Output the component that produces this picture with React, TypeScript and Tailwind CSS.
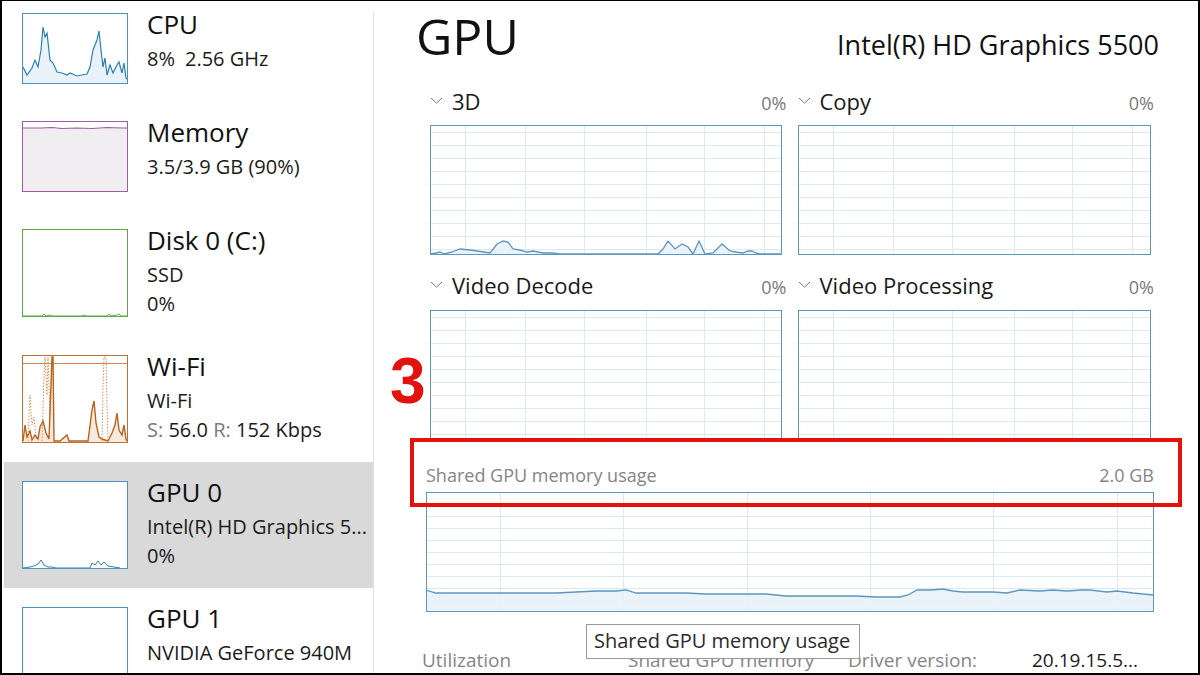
import React from "react";

type GraphProps = {
  w: number;
  h: number;
  vx: number[];
  hStart: number;
  hStep: number;
  line?: string;
};

// task manager style grid chart
function Graph({ w, h, vx, hStart, hStep, line }: GraphProps) {
  const rows: number[] = [];
  for (let y = hStart; y < h; y += hStep) rows.push(y);
  return (
    <svg width={w} height={h} className="block shrink-0">
      <rect x={0} y={0} width={w} height={h} fill="#ffffff" />
      {rows.map((y) => (
        <line key={"h" + y} x1={0} x2={w} y1={y + 0.5} y2={y + 0.5} stroke="#dde9f1" />
      ))}
      {vx.map((x) => (
        <line key={"v" + x} x1={x + 0.5} x2={x + 0.5} y1={0} y2={h} stroke="#dde9f1" />
      ))}
      {line && (
        <>
          <path d={`M0,${h} L${line} L${w},${h} Z`} fill="#e8f2f9" fillOpacity={0.9} />
          <polyline points={line} fill="none" stroke="#5d97bd" strokeWidth={1.3} />
        </>
      )}
      <rect x={0.5} y={0.5} width={w - 1} height={h - 1} fill="none" stroke="#5b98bb" />
    </svg>
  );
}

function Thumb({ h, color, children }: { h: number; color: string; children?: React.ReactNode }) {
  return (
    <svg width={106} height={h} className="block shrink-0">
      <rect x={0} y={0} width={106} height={h} fill="#ffffff" />
      {children}
      <rect x={0.5} y={0.5} width={105} height={h - 1} fill="none" stroke={color} />
    </svg>
  );
}

const cpuLine =
  "1,54 5,62 10,55 13,47 16,54 19,37 21,14 23,24 25,20 28,47 31,50 35,59 40,60 45,62 48,60 55,63 65,61 68,54 71,37 75,27 77,18 79,37 81,54 83,45 85,62 88,52 91,60 95,52 97,49 100,60 102,50 104,65 106,67";

const wifiSolid =
  "1,86 3,70 5,82 8,76 10,85 13,80 16,84 18,72 21,66 24,78 27,84 30,2 31,2 32,86 38,86 45,80 47,86 66,86 70,55 72,46 74,68 77,82 80,84 83,85 86,86 90,78 93,70 95,58 97,75 100,80 102,70 104,84 105,86";

const wifiDotted = [
  "6,86 8,40 10,70 12,62 14,84",
  "20,86 22,20 23,2 25,40 26,2 28,60",
  "80,86 81,30 82,2 84,2 85,50 86,86",
];

const gpu0Line = "1,87 8,86 12,85 16,83 19,79 22,84 26,86 30,86 34,87 68,87 70,82 73,84 76,80 79,84 82,81 86,85 92,86 98,87";

const gpuGridV = [35, 95, 154, 216, 274, 334];

const line3d =
  "0,129 6,128 10,127 14,129 22,127 30,124 40,125 47,126 54,127 60,128 64,123 67,119 73,116 78,117 83,124 90,125 97,127 103,126 108,127 113,128 122,128 130,129 153,129 197,129 228,129 233,124 238,116 245,124 252,119 258,122 263,129 269,116 275,129 283,128 288,123 292,119 300,126 306,127 313,128 318,126 322,126 326,128 330,129 352,129";

const sharedLine =
  "0,98 10,101 60,101 130,101 150,100 170,99 190,99 200,98 210,101 240,101 260,101 280,102 340,102 360,104 430,104 450,105 474,105 482,103 491,98 505,98 517,97 527,99 537,100 552,100 567,100 581,101 594,98 614,99 627,98 641,99 655,98 664,98 681,100 691,99 707,101 727,103";

function SideItem({
  title,
  sub,
  thumb,
  selected,
}: {
  title: string;
  sub: React.ReactNode[];
  thumb: React.ReactNode;
  selected?: boolean;
}) {
  return (
    <div className={`flex items-start pl-[18px] pt-[19px] pb-[18px] ${selected ? "bg-[#d9d9d9]" : ""}`}>
      {thumb}
      <div className="ml-[19px] flex flex-col text-[#1b1b1b] whitespace-nowrap">
        <div className="text-[26px] leading-[22px] text-[#111]">{title}</div>
        <div className="mt-[9px] flex flex-col">
          {sub.map((s, i) => (
            <div key={i} className="text-[20px] leading-[29px]">
              {s}
            </div>
          ))}
        </div>
      </div>
    </div>
  );
}

function Chevron() {
  return (
    <svg width={14} height={8} className="shrink-0 mr-[8px] self-start mt-[8px]">
      <polyline points="1,1 6.5,6 12,1" fill="none" stroke="#777" strokeWidth={1} />
    </svg>
  );
}

function Section({ label, graph }: { label: string; graph: React.ReactNode }) {
  return (
    <div className="flex flex-col">
      <div className="flex items-baseline -mr-[4px] h-[24px]">
        <Chevron />
        <span className="text-[22px] leading-[24px] text-[#1a1a1a]">{label}</span>
        <span className="ml-auto text-[18px] leading-[24px] text-[#7a7a7a]">0%</span>
      </div>
      {graph}
    </div>
  );
}

export default function App() {
  return (
    <div className="relative w-[1200px] h-[675px] overflow-hidden bg-white border-t border-l-2 border-r-2 border-b-2 border-black flex font-['Open_Sans','Noto_Sans',sans-serif]">
      {/* left list */}
      <div className="w-[371px] shrink-0 pl-[2px] -mt-[7px] flex flex-col">
        <SideItem
          title="CPU"
          sub={[
            <>
              8%<span className="ml-[10px]">2.56 GHz</span>
            </>,
          ]}
          thumb={
            <Thumb h={71} color="#4b93bd">
              <path d={`M1,70 L${cpuLine} L105,70 Z`} fill="#e9f2f8" />
              <polyline points={cpuLine} fill="none" stroke="#2f7fb5" strokeWidth={1.2} />
            </Thumb>
          }
        />
        <SideItem
          title="Memory"
          sub={["3.5/3.9 GB (90%)"]}
          thumb={
            <Thumb h={71} color="#a05aa8">
              <path d="M1,7 L20,7 30,6.5 40,7.5 55,7 70,7.5 85,6.5 100,7 105,7 L105,70 L1,70 Z" fill="#f1eef1" />
              <polyline points="1,7 20,7 30,6.5 40,7.5 55,7 70,7.5 85,6.5 100,7 105,7" fill="none" stroke="#a05aa8" strokeWidth={1.2} />
            </Thumb>
          }
        />
        <SideItem
          title="Disk 0 (C:)"
          sub={["SSD", "0%"]}
          thumb={
            <Thumb h={88} color="#5ea845">
              <polyline points="1,87 20,87 22,85 24,87 28,86 30,87 60,87 62,86 64,87 85,87 87,85 89,87 95,86 97,85 99,87 105,87" fill="none" stroke="#5ea845" strokeWidth={1} />
            </Thumb>
          }
        />
        <SideItem
          title="Wi-Fi"
          sub={[
            "Wi-Fi",
            <>
              <span className="text-[#7a7a7a]">S:</span> 56.0 <span className="text-[#7a7a7a]">R:</span> 152 Kbps
            </>,
          ]}
          thumb={
            <Thumb h={88} color="#c0712f">
              <line x1={0} x2={106} y1={8.5} y2={8.5} stroke="#cf8a55" />
              <path d={`M1,87 L${wifiSolid} L105,87 Z`} fill="#f7e9dd" />
              {wifiDotted.map((p, i) => (
                <polyline key={i} points={p} fill="none" stroke="#d9925a" strokeWidth={1} strokeDasharray="1.5 1.5" />
              ))}
              <polyline points={wifiSolid} fill="none" stroke="#b8631f" strokeWidth={1.4} />
            </Thumb>
          }
        />
        <SideItem
          title="GPU 0"
          selected
          sub={["Intel(R) HD Graphics 5...", "0%"]}
          thumb={
            <Thumb h={88} color="#4b93bd">
              <polyline points={gpu0Line} fill="none" stroke="#2f7fb5" strokeWidth={1} />
            </Thumb>
          }
        />
        <SideItem
          title="GPU 1"
          sub={["NVIDIA GeForce 940M", "0%"]}
          thumb={<Thumb h={88} color="#4b93bd" />}
        />
      </div>

      <div className="w-px shrink-0 mt-[11px] bg-[#e4e4e4]" />

      {/* detail panel */}
      <div className="flex-1 flex flex-col pl-[52px] pr-[44px]">
        <div className="mt-[10px] flex items-baseline justify-between -ml-[10px] -mr-[5px] text-[#111]">
          <span className="text-[50px] leading-[50px]">GPU</span>
          <span className="text-[27px] leading-[30px]">Intel(R) HD Graphics 5500</span>
        </div>

        <div className="mt-[28px] px-[4px] grid grid-cols-2 gap-x-[15px]">
          <Section label="3D" graph={<div className="mt-[12px]"><Graph w={352} h={130} vx={gpuGridV} hStart={7} hStep={13} line={line3d} /></div>} />
          <Section label="Copy" graph={<div className="mt-[12px]"><Graph w={353} h={130} vx={gpuGridV} hStart={7} hStep={13} /></div>} />
          <div className="mt-[18px]">
            <Section label="Video Decode" graph={<div className="mt-[13px]"><Graph w={352} h={130} vx={gpuGridV} hStart={7} hStep={13} /></div>} />
          </div>
          <div className="mt-[18px]">
            <Section label="Video Processing" graph={<div className="mt-[13px]"><Graph w={353} h={130} vx={gpuGridV} hStart={7} hStep={13} /></div>} />
          </div>
        </div>

        <div className="mt-[25px] flex justify-between text-[18px] leading-[20px] text-[#858585]">
          <span>Shared GPU memory usage</span>
          <span>2.0 GB</span>
        </div>
        <div className="mt-[7px]">
          <Graph w={728} h={120} vx={[74, 197, 321, 444, 567, 691]} hStart={12} hStep={12} line={sharedLine} />
        </div>

        <div className="mt-[37px] flex text-[19px] leading-[22px] text-[#858585] whitespace-nowrap -ml-[4px]">
          <span className="w-[206px]">Utilization</span>
          <span className="w-[220px]">Shared GPU memory</span>
          <span className="w-[184px]">Driver version:</span>
          <span className="text-[#1b1b1b]">20.19.15.5...</span>
        </div>
      </div>

      {/* annotation */}
      <div className="absolute left-[408px] top-[437px] w-[772px] h-[69px] border-[4px] border-[#e3120d]" />
      <div className="absolute left-[388px] top-[348px] text-[64px] leading-[64px] font-bold text-[#e3120d] font-['Liberation_Sans',sans-serif]">
        3
      </div>

      {/* tooltip */}
      <div className="absolute left-[584px] top-[623px] w-[274px] h-[35px] border border-[#9a9a9a] bg-white px-[7px] text-[20px] leading-[32px] text-[#2b2b2b] whitespace-nowrap">
        Shared GPU memory usage
      </div>
    </div>
  );
}
